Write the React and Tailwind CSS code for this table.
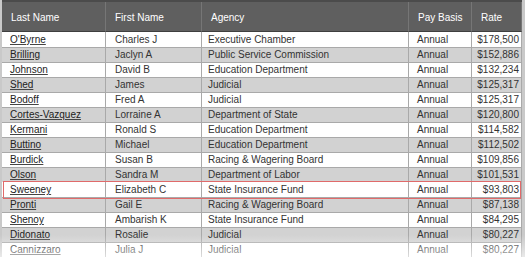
import React from "react";

const rows = [
  ["O'Byrne", "Charles J", "Executive Chamber", "$178,500"],
  ["Brilling", "Jaclyn A", "Public Service Commission", "$152,886"],
  ["Johnson", "David B", "Education Department", "$132,234"],
  ["Shed", "James", "Judicial", "$125,317"],
  ["Bodoff", "Fred A", "Judicial", "$125,317"],
  ["Cortes-Vazquez", "Lorraine A", "Department of State", "$120,800"],
  ["Kermani", "Ronald S", "Education Department", "$114,582"],
  ["Buttino", "Michael", "Education Department", "$112,502"],
  ["Burdick", "Susan B", "Racing & Wagering Board", "$109,856"],
  ["Olson", "Sandra M", "Department of Labor", "$101,531"],
  ["Sweeney", "Elizabeth C", "State Insurance Fund", "$93,803"],
  ["Pronti", "Gail E", "Racing & Wagering Board", "$87,138"],
  ["Shenoy", "Ambarish K", "State Insurance Fund", "$84,295"],
  ["Didonato", "Rosalie", "Judicial", "$80,227"],
  ["Cannizzaro", "Julia J", "Judicial", "$80,227"],
];

const cols = "grid grid-cols-[104px_96px_207px_63px_50px]";

export default function App() {
  return (
    <div
      className="relative w-[525px] h-[257px] overflow-hidden bg-[#c9c9c9] text-[10px]"
      style={{ fontFamily: '"Liberation Sans", Arial, sans-serif' }}
    >
      <div className="pl-[2px] pr-[3px]">
        {/* header */}
        <div className={`${cols} h-[32px] bg-[#5f5f5f] border-t-2 border-[#4b4b4b] text-white`}>
          {["Last Name", "First Name", "Agency", "Pay Basis", "Rate"].map((h) => (
            <div
              key={h}
              className="flex items-center pl-[9px] pt-[1px] border-r border-b border-r-[#767676] border-b-[#3f3f3f]"
            >
              {h}
            </div>
          ))}
        </div>
        {/* body */}
        {rows.map((r, i) => (
          <div
            key={r[0]}
            className={`${cols} h-[15px] leading-[15px] text-[#333] ${
              i % 2 === 0 ? "bg-white" : "bg-[#d2d2d2]"
            } ${i === 10 ? "relative z-10" : ""}`}
          >
            <div className="pl-[8px] border-r border-b border-[#a9a9a9] text-[#222]">
              <span className="underline underline-offset-[1px] decoration-[#444]">{r[0]}</span>
            </div>
            <div className="pl-[9px] border-r border-b border-[#a9a9a9]">{r[1]}</div>
            <div className="pl-[6px] border-r border-b border-[#a9a9a9]">{r[2]}</div>
            <div className="pl-[8px] border-r border-b border-[#a9a9a9]">Annual</div>
            <div className="pr-[2px] text-right border-r border-b border-[#a9a9a9]">{r[3]}</div>
            {i === 10 && (
              <div className="absolute left-[1px] right-[1px] top-[-1px] bottom-[-2px] border border-[#e06a6a] pointer-events-none" />
            )}
          </div>
        ))}
      </div>
      <div className="absolute left-0 right-0 bottom-0 h-[22px] bg-gradient-to-b from-transparent to-white/60 pointer-events-none z-20" />
    </div>
  );
}
